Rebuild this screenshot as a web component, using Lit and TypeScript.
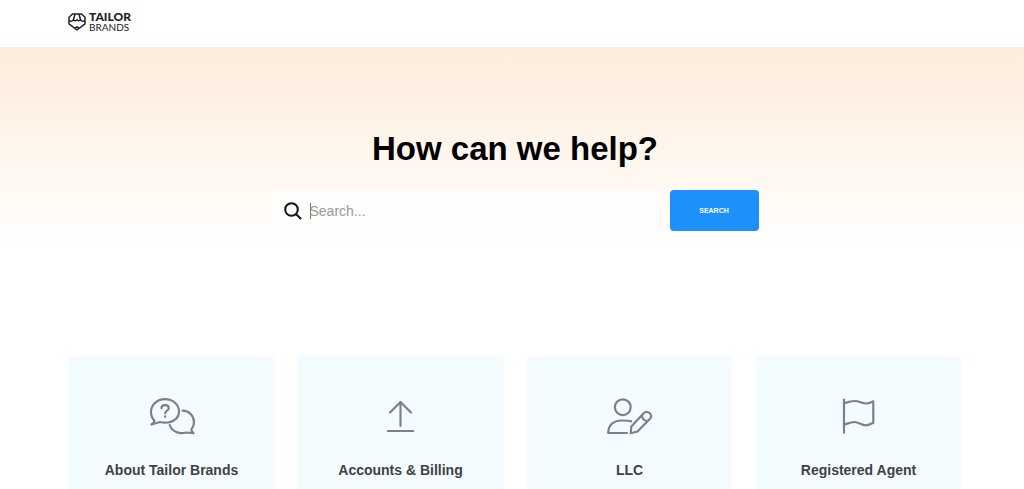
import { LitElement, html, css, svg, nothing } from "lit";
import { customElement, state } from "lit/decorators.js";

interface Topic {
  title: string;
  icon: unknown;
}

const topics: Topic[] = [
  {
    title: "About Tailor Brands",
    icon: svg`
      <path d="M7.500 24.500C5 22.500 4 19.500 4 16C4 8.800 10 3.200 18 3.200S32 8.700 32 15.500S26 26.700 18 26.700C16 26.700 14.500 26.500 13 26L4.500 28.500C6.300 27.500 7.300 26.200 7.500 24.500Z"/>
      <path d="M14.500 12.300C14.500 10.200 16 9.200 18 9.200C20.200 9.200 21.800 10.300 21.800 12.200C21.800 14.800 18.200 14.500 18.200 17.300"/>
      <path d="M18.200 20.300V21"/>
      <path d="M35.500 14.700C42 14.500 47 20 47 26.300C47 28.800 46 31.500 44.300 33.500C44.500 35 45.200 36 46.500 37.200L39 36.500C32.500 38.500 25 35.800 22.700 29"/>`,
  },
  {
    title: "Accounts & Billing",
    icon: svg`
      <path d="M24.500 30V6"/>
      <path d="M14 16.500L24.500 6L35 16.500"/>
      <path d="M11.800 35H37.200"/>`,
  },
  {
    title: "LLC",
    icon: svg`
      <circle cx="17.800" cy="11.200" r="7.900"/>
      <path d="M26.200 25.300C24 24.500 21 24.500 16.500 24.500C8.500 24.500 3.200 29 3.200 37H22"/>
      <path d="M25.700 37.200L26.300 30.500L38.700 17.200C40.300 15.500 42.600 15.500 44.500 17C46.500 18.800 46.500 21 45 22.800L32.500 35.500Z"/>
      <path d="M37 19.500C37.200 22.800 39.500 25 42.700 25"/>`,
  },
  {
    title: "Registered Agent",
    icon: svg`
      <path d="M10 3.500V36.800"/>
      <path d="M10 7.300C14 6 16.500 5 20.500 5C25 5 28 7.500 32 7.500C35 7.500 36.500 6.500 39.300 5.300V26.700C36.500 28.300 34.500 29.300 31.500 29.300C27.500 29.300 25 26 20.500 26C16.500 26 14 27.500 10 28.700"/>`,
  },
];

@customElement("topic-card")
export class TopicCard extends LitElement {
  static properties = { topic: { attribute: false } };

  declare topic: Topic;

  static styles = css`
    :host {
      display: block;
    }
    .card {
      display: flex;
      flex-direction: column;
      align-items: center;
      gap: 22px;
      padding: 40px 12px;
      border-radius: 4px;
      background: #f5fcff;
      color: #3c4245;
      text-decoration: none;
    }
    .icon {
      width: 50px;
      height: 42px;
      fill: none;
      stroke: #7b818c;
      stroke-width: 2.2;
      stroke-linecap: round;
      stroke-linejoin: round;
    }
    .title {
      margin: 0;
      font-size: 14px;
      line-height: 20px;
      font-weight: 700;
      text-align: center;
    }
  `;

  render() {
    if (!this.topic) return nothing;
    return html`
      <a class="card" href="#">
        <svg class="icon" viewBox="0 0 50 42" aria-hidden="true">${this.topic.icon}</svg>
        <h2 class="title">${this.topic.title}</h2>
      </a>
    `;
  }
}

@customElement("app-root")
export class AppRoot extends LitElement {
  @state() private query = "";

  static styles = css`
    :host {
      display: block;
      height: 100vh;
      overflow: hidden;
      background: #fff;
      color: #000;
      font-family: "Liberation Sans", Arial, sans-serif;
    }
    .header {
      display: flex;
      align-items: center;
      padding: 12px 62px 15px 68px;
    }
    .brand {
      display: flex;
      align-items: center;
      gap: 3px;
      color: #222;
      text-decoration: none;
    }
    .mark {
      width: 18px;
      height: 18px;
      fill: none;
      stroke: currentColor;
      stroke-width: 1.5;
      stroke-linejoin: round;
    }
    .wordmark {
      display: flex;
      flex-direction: column;
      font-family: Lato, sans-serif;
      font-size: 10px;
      line-height: 10px;
    }
    .wordmark b {
      font-size: 12px;
      font-weight: 900;
    }
    .hero {
      display: flex;
      flex-direction: column;
      align-items: center;
      gap: 21px;
      padding: 82px 62px 109px 68px;
      background: linear-gradient(#fdecdc 0, #fff9f2 140px, #fff 202px);
    }
    .headline {
      margin: 0;
      font-size: 33px;
      line-height: 40px;
      font-weight: 700;
      text-align: center;
    }
    .search {
      display: flex;
      align-items: center;
      gap: 12px;
      width: 100%;
      max-width: 487px;
    }
    .field {
      display: flex;
      flex: 1;
      align-items: center;
      gap: 8px;
      min-width: 0;
      height: 41px;
      padding-left: 12px;
      border-radius: 4px;
      background: #fffefd;
    }
    .glass {
      flex: none;
      width: 18px;
      height: 18px;
      fill: none;
      stroke: #111;
      stroke-width: 2;
      stroke-linecap: round;
    }
    .input {
      flex: 1;
      min-width: 0;
      height: 16px;
      padding: 0;
      border: 0;
      outline: 0;
      background: linear-gradient(#777, #777) left / 1px 100% no-repeat;
      font: 14px/16px "Liberation Sans", Arial, sans-serif;
      color: #222;
    }
    .input::placeholder {
      color: #999;
      opacity: 1;
    }
    .submit {
      width: 89px;
      height: 41px;
      padding: 0;
      border: 0;
      border-radius: 4px;
      background: #1e90fb;
      color: #fff;
      font: 700 7px/12px "Liberation Sans", Arial, sans-serif;
    }
    .topics {
      display: grid;
      grid-template-columns: repeat(4, 1fr);
      gap: 22px;
      padding: 16px 62px 40px 68px;
    }
  `;

  render() {
    return html`
      <header class="header">
        <a class="brand" href="#" aria-label="Tailor Brands">
          <svg class="mark" viewBox="0 0 18 18" aria-hidden="true">
            <path d="M4.500 1H13.500L17 4.300V10.800L9 17L1 10.800V4.300Z" />
            <path d="M1 7.500C2.500 8.800 4.500 8.500 5.500 6.500C6.300 8.300 8.300 8.300 9 6.500C9.700 8.300 11.700 8.300 12.500 6.500C13.500 8.500 15.500 8.800 17 7.500" />
            <path d="M5.500 6.500L7 1.200M12.500 6.500L11 1.200M7 15.200L9 13.800L11 15.200" />
          </svg>
          <span class="wordmark"><b>TAILOR</b><span>BRANDS</span></span>
        </a>
      </header>
      <main>
        <section class="hero">
          <h1 class="headline">How can we help?</h1>
          <form class="search" role="search" @submit=${(e: Event) => e.preventDefault()}>
            <label class="field">
              <svg class="glass" viewBox="0 0 18 18" aria-hidden="true">
                <circle cx="7.500" cy="7.500" r="6.300" />
                <path d="M12.200 12.200L16.500 16.500" />
              </svg>
              <input
                class="input"
                type="text"
                placeholder="Search..."
                aria-label="Search"
                .value=${this.query}
                @input=${(e: Event) => (this.query = (e.target as HTMLInputElement).value)}
              />
            </label>
            <button class="submit" type="submit">SEARCH</button>
          </form>
        </section>
        <nav class="topics" aria-label="Help topics">
          ${topics.map((topic) => html`<topic-card .topic=${topic}></topic-card>`)}
        </nav>
      </main>
    `;
  }
}
